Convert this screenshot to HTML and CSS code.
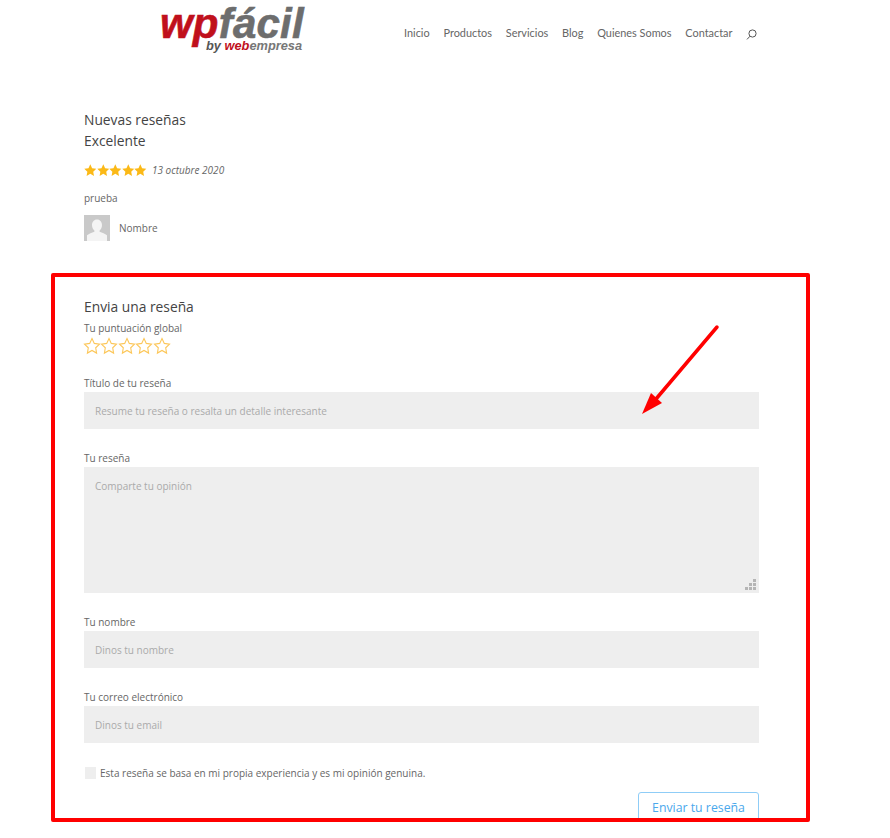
FILE: index.html
```html
<!DOCTYPE html>
<html lang="es">
<head>
    <meta charset="UTF-8">
    <meta name="viewport" content="width=device-width, initial-scale=1.0">
    <title>Nuevas reseñas</title>
    <link rel="stylesheet" href="styles.css">
</head>
<body>
    <header class="site-header">
        <a class="logo" href="#">
            <span class="logo-main"><span class="logo-wp">wp</span><span class="logo-facil">fácil</span></span>
            <span class="logo-sub">by <span class="logo-web">web</span><span class="logo-emp">empresa</span></span>
        </a>
        <nav class="main-nav">
            <a href="#">Inicio</a>
            <a href="#">Productos</a>
            <a href="#">Servicios</a>
            <a href="#">Blog</a>
            <a href="#">Quienes Somos</a>
            <a href="#">Contactar</a>
            <svg class="search-icon" viewBox="0 0 11 11" width="11" height="11">
                <circle cx="6.5" cy="4.5" r="3.6" fill="none" stroke="#555" stroke-width="1"/>
                <path d="M4 7.200 1 10.400" stroke="#555" stroke-width="1" fill="none"/>
            </svg>
        </nav>
    </header>

    <section class="reviews">
        <h2 class="reviews-title">Nuevas reseñas</h2>
        <h3 class="review-title">Excelente</h3>
        <div class="review-meta">
            <div class="stars-full">
                <svg viewBox="0 0 18 18" width="12.600" height="12.600"><path d="M9 .5l2.600 5.500 6 .8-4.400 4.200 1.100 6L9 14.100 3.700 17l1.100-6L.4 6.800l6-.8z"/></svg>
                <svg viewBox="0 0 18 18" width="12.600" height="12.600"><path d="M9 .5l2.600 5.500 6 .8-4.400 4.200 1.100 6L9 14.100 3.700 17l1.100-6L.4 6.800l6-.8z"/></svg>
                <svg viewBox="0 0 18 18" width="12.600" height="12.600"><path d="M9 .5l2.600 5.500 6 .8-4.400 4.200 1.100 6L9 14.100 3.700 17l1.100-6L.4 6.800l6-.8z"/></svg>
                <svg viewBox="0 0 18 18" width="12.600" height="12.600"><path d="M9 .5l2.600 5.500 6 .8-4.400 4.200 1.100 6L9 14.100 3.700 17l1.100-6L.4 6.800l6-.8z"/></svg>
                <svg viewBox="0 0 18 18" width="12.600" height="12.600"><path d="M9 .5l2.600 5.500 6 .8-4.400 4.200 1.100 6L9 14.100 3.700 17l1.100-6L.4 6.800l6-.8z"/></svg>
            </div>
            <em class="review-date">13 octubre 2020</em>
        </div>
        <p class="review-text">prueba</p>
        <div class="review-author">
            <svg class="avatar" viewBox="0 0 26 26" width="26" height="26">
                <rect width="26" height="26" fill="#c9c9c9"/>
                <path d="M13 4.500c3.200 0 5 2.500 5 5.500 0 2.400-1 4.300-2.400 5.400v1.400c2.600.8 5.400 2 7.400 3.400V26H3v-5.800c2-1.400 4.800-2.600 7.400-3.400v-1.400C9 14.300 8 12.400 8 10c0-3 1.800-5.500 5-5.500z" fill="#f4f4f4"/>
            </svg>
            <span>Nombre</span>
        </div>
    </section>

    <form class="review-form">
        <h2 class="form-title">Envia una reseña</h2>
        <div class="form-label rating-label">Tu puntuación global</div>
        <div class="stars-empty">
            <svg viewBox="0 0 18 18" width="18" height="18"><path d="M9 1.500l2.300 4.900 5.200.7-3.800 3.700.9 5.300L9 13.500l-4.600 2.600.9-5.300-3.800-3.700 5.200-.7z"/></svg>
            <svg viewBox="0 0 18 18" width="18" height="18"><path d="M9 1.500l2.300 4.900 5.200.7-3.800 3.700.9 5.300L9 13.500l-4.600 2.600.9-5.300-3.800-3.700 5.200-.7z"/></svg>
            <svg viewBox="0 0 18 18" width="18" height="18"><path d="M9 1.500l2.300 4.900 5.200.7-3.800 3.700.9 5.300L9 13.500l-4.600 2.600.9-5.300-3.800-3.700 5.200-.7z"/></svg>
            <svg viewBox="0 0 18 18" width="18" height="18"><path d="M9 1.500l2.300 4.900 5.200.7-3.800 3.700.9 5.300L9 13.500l-4.600 2.600.9-5.300-3.800-3.700 5.200-.7z"/></svg>
            <svg viewBox="0 0 18 18" width="18" height="18"><path d="M9 1.500l2.300 4.900 5.200.7-3.800 3.700.9 5.300L9 13.500l-4.600 2.600.9-5.300-3.800-3.700 5.200-.7z"/></svg>
        </div>

        <label class="form-label field-label title-label">Título de tu reseña</label>
        <div class="field field-short">Resume tu reseña o resalta un detalle interesante</div>

        <label class="form-label field-label">Tu reseña</label>
        <div class="field field-textarea">
            Comparte tu opinión
            <svg class="resize-grip" viewBox="0 0 12 12" width="12" height="12">
                <path d="M9 0h3v3H9zM9 4h3v3H9zM5 4h3v3H5zM9 8h3v3H9zM5 8h3v3H5zM1 8h3v3H1z" fill="#b5b5b5"/>
            </svg>
        </div>

        <label class="form-label field-label">Tu nombre</label>
        <div class="field field-short">Dinos tu nombre</div>

        <label class="form-label field-label">Tu correo electrónico</label>
        <div class="field field-short">Dinos tu email</div>

        <label class="check-row"><span class="check-box"></span>Esta reseña se basa en mi propia experiencia y es mi opinión genuina.</label>

        <div class="form-actions">
            <button type="button" class="submit-btn">Enviar tu reseña</button>
        </div>
    </form>

    <!-- red annotation on top of the screenshot -->
    <div class="note-frame"></div>
    <svg class="note-arrow" viewBox="0 0 90 100" width="90" height="100">
        <path d="M87 5 26 77" stroke="#f00" stroke-width="3.500" stroke-linecap="round" fill="none"/>
        <path d="M12 92 21 71 32 81z" fill="#f00"/>
    </svg>
</body>
</html>
```

FILE: styles.css
```css
html, body { margin: 0; padding: 0; }
body { position: relative; height: 838px; overflow: hidden; background: #fff; color: #666; font-family: "Open Sans", Arial, sans-serif; font-size: 10px; }
a { color: inherit; text-decoration: none; }

.site-header { display: flex; align-items: flex-start; height: 66px; padding-left: 160px; }
.logo { display: flex; flex-direction: column; width: 244px; height: 54px; font-family: "Liberation Sans", Arial, sans-serif; font-style: italic; font-weight: bold; }
.logo-main { font-size: 42px; line-height: 48px; letter-spacing: 0.200px; white-space: nowrap; -webkit-text-stroke: 0.600px; }
.logo-wp { color: #c0101c; }
.logo-facil { color: #6d6d6d; }
.logo-sub { margin: -9px 0 0 46px; font-size: 12.800px; line-height: 13px; color: #555; white-space: nowrap; }
.logo-web { color: #c0101c; }
.logo-emp { color: #777; }

.main-nav { display: flex; align-items: center; gap: 13.800px; height: 65px; font-family: "Lato", sans-serif; font-size: 10.900px; color: #666; white-space: nowrap; }
.search-icon { margin-top: 3px; }

.reviews { padding-left: 84px; padding-top: 43px; }
.reviews-title, .review-title, .form-title { margin: 0; font-weight: normal; font-size: 13.800px; line-height: 21px; color: #444; }
.review-meta { display: flex; align-items: center; gap: 5px; margin-top: 10px; height: 18px; }
.stars-full { display: flex; fill: #fbb917; }
.review-date { color: #666; font-size: 10px; }
.review-text { margin: 11px 0 0; line-height: 16px; color: #666; }
.review-author { display: flex; align-items: center; gap: 9px; margin-top: 9px; }
.avatar { display: block; }

.review-form { padding: 56px 0 0 84px; width: 675px; }
.form-title { line-height: 20px; }
.form-label { display: block; font-size: 10px; line-height: 14px; color: #666; }
.rating-label { margin-top: 4px; }
.stars-empty { display: flex; height: 18px; margin-top: 2px; margin-left: -1px; }
.stars-empty svg { fill: none; stroke: #fcc75a; stroke-width: 1.100; margin-right: -0.600px; }

.field-label { margin-top: 22px; margin-bottom: 2px; }
.title-label { margin-top: 21px; }
.field { position: relative; box-sizing: border-box; background: #eee; color: #aaa; font-size: 10px; padding-left: 11px; }
.field-short { height: 37px; line-height: 38px; }
.field-textarea { height: 126px; padding-top: 11px; line-height: 16px; }
.resize-grip { position: absolute; right: 3px; bottom: 2px; }

.check-row { display: flex; align-items: center; gap: 4px; margin-top: 23px; margin-left: 1px; line-height: 14px; color: #666; }
.check-box { width: 11px; height: 12px; background: #eee; }

.form-actions { display: flex; justify-content: flex-end; margin-top: 12px; }
.submit-btn { box-sizing: border-box; width: 121px; height: 30px; padding: 0; background: #fff; border: 1.500px solid #8fcdf7; border-radius: 3px; color: #4aa8ec; font-family: "Open Sans", Arial, sans-serif; font-size: 12.300px; }

.note-frame { position: absolute; left: 51px; top: 273px; width: 759px; height: 549px; box-sizing: border-box; border: 4px solid #f00; border-radius: 2px; }
.note-arrow { position: absolute; left: 630px; top: 322px; }
```
